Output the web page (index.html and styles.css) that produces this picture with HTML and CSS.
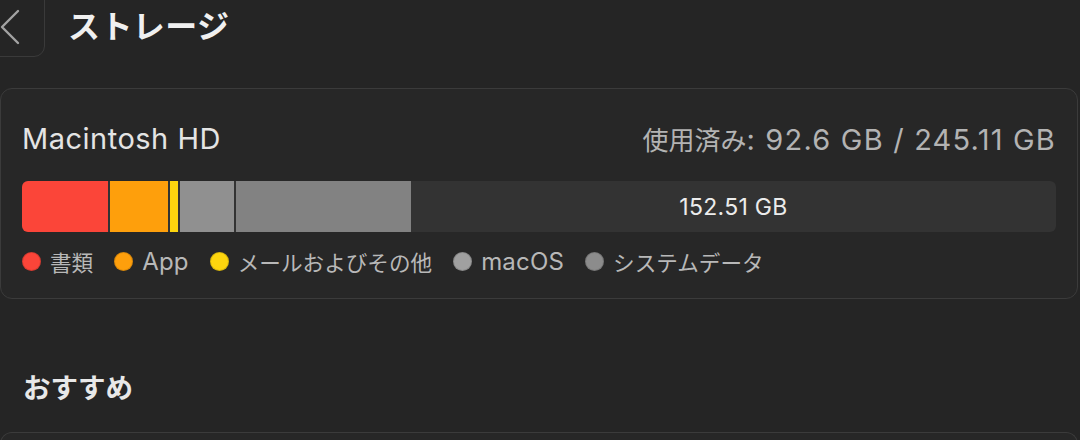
FILE: index.html
```html
<!DOCTYPE html>
<html lang="ja">
<head>
<meta charset="utf-8">
<link rel="stylesheet" href="styles.css">
</head>
<body>
<div class="page">
  <header class="header">
    <div class="back">
      <svg width="22" height="36" viewBox="0 0 22 36"><path d="M19 2 L3 18 L19 34" fill="none" stroke="#a3a3a3" stroke-width="2.4" stroke-linecap="round" stroke-linejoin="round"/></svg>
    </div>
    <h1 class="title">ストレージ</h1>
  </header>

  <section class="card">
    <div class="card-head">
      <div class="disk">Macintosh HD</div>
      <div class="used">使用済み<span class="lat">: 92.6 GB / 245.11 GB</span></div>
    </div>
    <div class="bar">
      <div class="seg red" style="width:86px"></div>
      <div class="seg orange" style="width:58px"></div>
      <div class="seg yellow" style="width:8px"></div>
      <div class="seg gray1" style="width:54px"></div>
      <div class="seg gray2" style="width:175px"></div>
      <div class="free">152.51 GB</div>
    </div>
    <ul class="legend">
      <li><span class="dot red"></span>書類</li>
      <li><span class="dot orange"></span><span class="lat">App</span></li>
      <li><span class="dot yellow"></span>メールおよびその他</li>
      <li><span class="dot gray1"></span><span class="lat">macOS</span></li>
      <li><span class="dot gray2"></span>システムデータ</li>
    </ul>
  </section>

  <h2 class="section-title">おすすめ</h2>
  <section class="card next"></section>
</div>
</body>
</html>
```

FILE: styles.css
```css
html, body {
  margin: 0;
  padding: 0;
  background: #252525;
  overflow: hidden;
}
body {
  width: 1080px;
  height: 440px;
  font-family: Inter, "Noto Sans CJK JP", sans-serif;
  color: #e2e2e2;
}
.page {
  display: flex;
  flex-direction: column;
  height: 440px;
  overflow: hidden;
}
.header {
  display: flex;
  align-items: center;
  height: 57px;
  flex: none;
}
.back {
  box-sizing: border-box;
  width: 61px;
  height: 70px;
  margin: -13px 0 0 -16px;
  border: 1px solid #3a3a3a;
  border-radius: 11px;
  display: flex;
  align-items: center;
  justify-content: flex-start;
  padding-left: 14px;
  padding-top: 9px;
}
.title {
  margin: -10px 0 0 23px;
  font-size: 32px;
  font-weight: 700;
  color: #f0f0f0;
  letter-spacing: 0.4px;
}
.card {
  box-sizing: border-box;
  flex: none;
  margin: 31px 2px 0 0;
  height: 211px;
  border: 1px solid #3b3b3b;
  border-radius: 12px;
  background: #272727;
  padding: 30px 21px 0 21px;
}
.card-head {
  display: flex;
  justify-content: space-between;
  align-items: center;
  height: 38px;
}
.disk {
  font-size: 29px;
  letter-spacing: 0.5px;
  color: #e4e4e4;
}
.used {
  font-size: 26px;
  color: #b3b3b3;
}
.used .lat {
  font-size: 29px;
  letter-spacing: 1.2px;
}
.bar {
  margin-top: 24px;
  height: 51px;
  display: flex;
  gap: 2px;
  background: #333333;
  border-radius: 6px;
  overflow: hidden;
}
.seg { height: 100%; flex: none; }
.red { background: #fb4539; }
.orange { background: #fe9f0c; }
.yellow { background: #fdd50e; }
.gray1 { background: #909090; }
.gray2 { background: #828282; }
.free {
  flex: 1;
  display: flex;
  align-items: center;
  justify-content: center;
  font-size: 23px;
  letter-spacing: 0.3px;
  color: #ececec;
  margin-left: -2px;
}
.legend {
  list-style: none;
  margin: 15px 0 0 0;
  padding: 0;
  display: flex;
  gap: 21px;
  font-size: 21.6px;
  color: #b8b8b8;
}
.legend .lat {
  font-size: 24px;
  letter-spacing: 0.2px;
}
.legend li {
  display: flex;
  align-items: center;
  gap: 9px;
  height: 28px;
}
.dot {
  width: 19px;
  height: 19px;
  border-radius: 50%;
  box-shadow: inset 0 0 0 1px rgba(0,0,0,0.15);
}
.legend .gray1 { background: #a0a0a0; }
.legend .gray2 { background: #8c8c8c; }
.section-title {
  flex: none;
  margin: 72px 0 0 23px;
  font-size: 27.5px;
  font-weight: 700;
  color: #e8e8e8;
  line-height: 34px;
}
.card.next {
  margin-top: 27px;
  height: 7px;
  border-bottom: none;
  border-radius: 12px 12px 0 0;
}
```
